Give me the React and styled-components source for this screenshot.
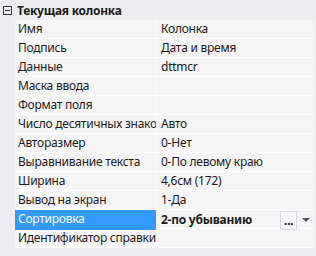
import React from 'react';
import styled, { createGlobalStyle } from 'styled-components';

const GlobalStyle = createGlobalStyle`
  body {
    margin: 0;
    background: #eeeef0;
    font-family: 'Noto Sans', 'Liberation Sans', sans-serif;
    font-size: 12px;
    letter-spacing: -0.25px;
    color: #1b1b1b;
  }
`;

const Grid = styled.div`
  width: 316px;
  height: 256px;
  background: #eeeef0;
  overflow: hidden;
`;

const Category = styled.div`
  display: flex;
  align-items: center;
  height: 20px;
  padding-left: 3px;
  gap: 5px;
  font-weight: bold;
`;

const Toggle = styled.span`
  box-sizing: border-box;
  width: 9px;
  height: 9px;
  border: 1px solid #333;
  position: relative;
  &::after {
    content: '';
    position: absolute;
    left: 1px;
    right: 1px;
    top: 3px;
    height: 1px;
    background: #333;
  }
`;

const Rows = styled.div`
  margin-left: 15px;
  width: 299px;
  background: #f5f5f5;
`;

const Row = styled.div`
  display: grid;
  grid-template-columns: 142px 1fr;
  height: 19px;
  box-sizing: border-box;
  border-bottom: 1px solid #fdfdfd;
`;

const Name = styled.div`
  box-sizing: border-box;
  padding-left: 3px;
  line-height: 18px;
  white-space: nowrap;
  overflow: hidden;
  border-right: 1px solid #fdfdfd;
  background: ${(p) => (p.$selected ? '#3399ff' : 'transparent')};
  color: ${(p) => (p.$selected ? '#fff' : 'inherit')};
`;

const Value = styled.div`
  display: flex;
  align-items: center;
  padding-left: 4px;
  line-height: 18px;
  white-space: nowrap;
  font-weight: ${(p) => (p.$bold ? 'bold' : 'normal')};
`;

const Text = styled.span`
  flex: 1;
`;

const DotsButton = styled.span`
  box-sizing: border-box;
  width: 17px;
  height: 19px;
  margin-top: 1px;
  border: 1px solid #d6d6e6;
  background: #f7f7f7;
  font-weight: bold;
  font-size: 13px;
  line-height: 17px;
  text-align: center;
  letter-spacing: -0.5px;
`;

const Arrow = styled.span`
  width: 17px;
  display: flex;
  justify-content: center;
  &::after {
    content: '';
    border-left: 4px solid transparent;
    border-right: 4px solid transparent;
    border-top: 4px solid #555566;
  }
`;

const rows = [
  ['Имя', 'Колонка'],
  ['Подпись', 'Дата и время'],
  ['Данные', 'dttmcr'],
  ['Маска ввода', ''],
  ['Формат поля', ''],
  ['Число десятичных знаков', 'Авто'],
  ['Авторазмер', '0-Нет'],
  ['Выравнивание текста', '0-По левому краю'],
  ['Ширина', '4,6см (172)'],
  ['Вывод на экран', '1-Да'],
  ['Сортировка', '2-по убыванию', true],
  ['Идентификатор справки', ''],
];

const App = () => (
  <>
    <GlobalStyle />
    <Grid>
      <Category>
        <Toggle />
        Текущая колонка
      </Category>
      <Rows>
        {rows.map(([name, value, selected]) => (
          <Row key={name}>
            <Name $selected={selected}>{name}</Name>
            <Value $bold={selected}>
              <Text>{value}</Text>
              {selected && (
                <>
                  <DotsButton>...</DotsButton>
                  <Arrow />
                </>
              )}
            </Value>
          </Row>
        ))}
      </Rows>
    </Grid>
  </>
);

export default App;
